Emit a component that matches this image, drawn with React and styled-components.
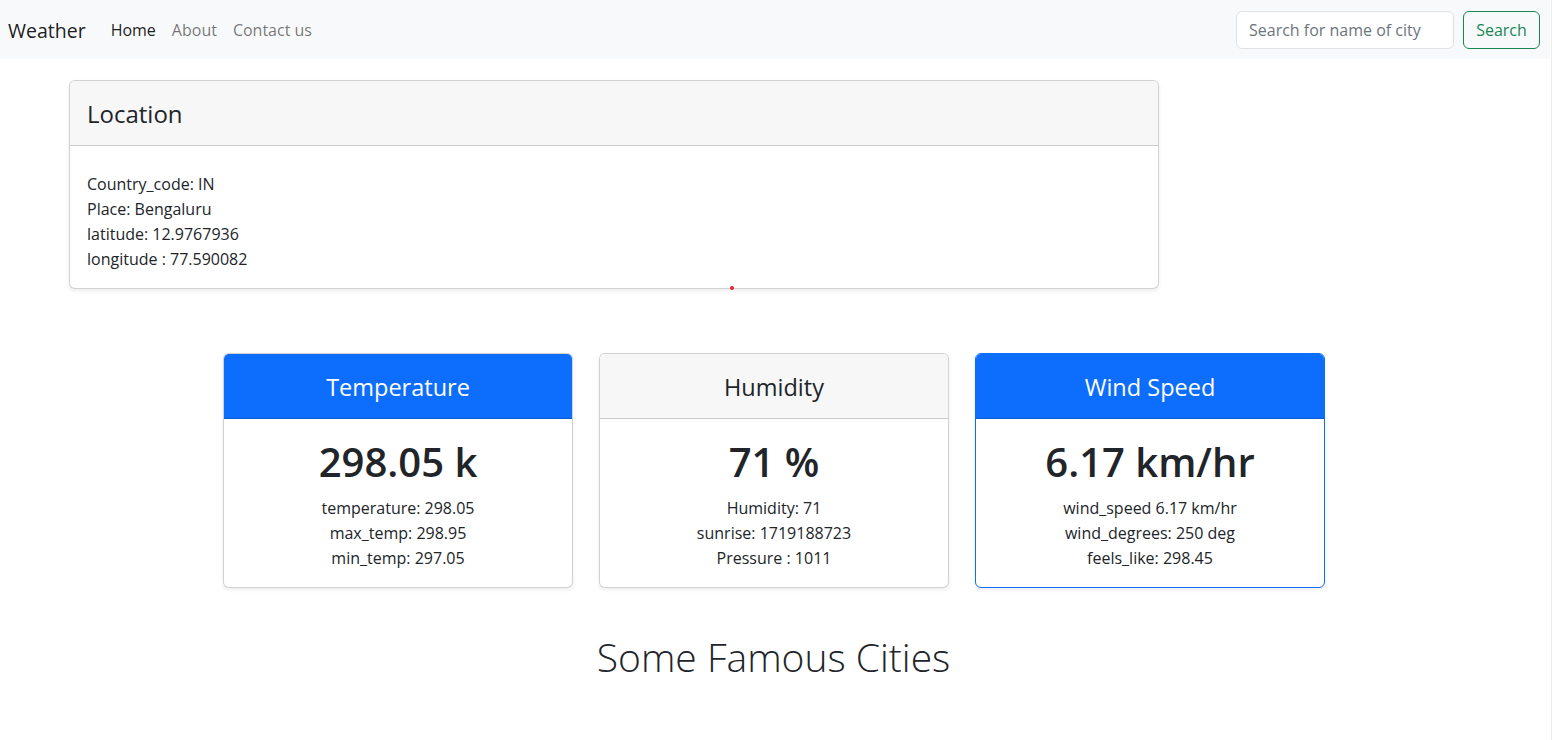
import React from 'react';
import styled, { createGlobalStyle } from 'styled-components';

const GlobalStyle = createGlobalStyle`
  html, body {
    margin: 0;
    padding: 0;
    background: #fff;
  }
  body {
    font-family: "Open Sans", "Noto Sans", sans-serif;
    font-size: 16px;
    color: #212529;
  }
  * {
    box-sizing: border-box;
  }
`;

const stats = [
  {
    title: 'Temperature',
    value: '298.05 k',
    lines: ['temperature: 298.05', 'max_temp: 298.95', 'min_temp: 297.05'],
    variant: 'blue',
  },
  {
    title: 'Humidity',
    value: '71 %',
    lines: ['Humidity: 71', 'sunrise: 1719188723', 'Pressure : 1011'],
    variant: 'plain',
  },
  {
    title: 'Wind Speed',
    value: '6.17 km/hr',
    lines: ['wind_speed 6.17 km/hr', 'wind_degrees: 250 deg', 'feels_like: 298.45'],
    variant: 'outlined',
  },
];

const App = () => {
  return (
    <Page>
      <GlobalStyle />
      <NavBar>
        <Brand>Weather</Brand>
        <NavLinks>
          <NavLink $active>Home</NavLink>
          <NavLink>About</NavLink>
          <NavLink>Contact us</NavLink>
        </NavLinks>
        <SearchForm onSubmit={(e) => e.preventDefault()}>
          <SearchInput type="search" placeholder="Search for name of city" />
          <SearchButton type="submit">Search</SearchButton>
        </SearchForm>
      </NavBar>

      <LocationCard>
        <LocationHeader>Location</LocationHeader>
        <LocationBody>
          <div>Country_code: IN</div>
          <div>Place: Bengaluru</div>
          <div>latitude: 12.9767936</div>
          <div>longitude : 77.590082</div>
        </LocationBody>
        <Dot />
      </LocationCard>

      <StatsRow>
        {stats.map((s) => (
          <StatCard key={s.title} $variant={s.variant}>
            <StatHeader $variant={s.variant}>{s.title}</StatHeader>
            <StatBody>
              <BigValue>{s.value}</BigValue>
              {s.lines.map((l) => (
                <StatLine key={l}>{l}</StatLine>
              ))}
            </StatBody>
          </StatCard>
        ))}
      </StatsRow>

      <SectionTitle>Some Famous Cities</SectionTitle>
    </Page>
  );
};

export default App;

const Page = styled.div`
  min-height: 740px;
  width: 1552px;
  border-right: 1px solid #ececec;
  overflow: hidden;
`;

const NavBar = styled.nav`
  height: 59px;
  margin-right: 1px;
  background: #f8f9fa;
  display: flex;
  align-items: center;
  padding: 1px 10px 0 8px;
`;

const Brand = styled.a`
  font-size: 19.5px;
  color: rgba(0, 0, 0, 0.9);
  margin-right: 17px;
  cursor: pointer;
`;

const NavLinks = styled.div`
  display: flex;
  flex: 1;
`;

const NavLink = styled.a`
  padding: 0 8px;
  font-size: 16px;
  color: ${(p) => (p.$active ? 'rgba(0, 0, 0, 0.9)' : 'rgba(0, 0, 0, 0.55)')};
  cursor: pointer;
`;

const SearchForm = styled.form`
  display: flex;
  gap: 9px;
`;

const SearchInput = styled.input`
  width: 218px;
  height: 38px;
  padding: 6px 12px;
  font-family: inherit;
  font-size: 16px;
  color: #212529;
  background: #fff;
  border: 1px solid #dee2e6;
  border-radius: 6px;
  outline: none;

  &::placeholder {
    color: #6c757d;
  }
`;

const SearchButton = styled.button`
  height: 38px;
  width: 77px;
  padding: 6px 0;
  font-family: inherit;
  font-size: 16px;
  color: #198754;
  background: transparent;
  border: 1px solid #198754;
  border-radius: 6px;
  cursor: pointer;
`;

const Card = styled.div`
  position: relative;
  background: #fff;
  border: 1px solid rgba(0, 0, 0, 0.175);
  border-radius: 6px;
  box-shadow: 0 2px 4px rgba(0, 0, 0, 0.075);
`;

const LocationCard = styled(Card)`
  width: 1090px;
  margin: 21px 0 0 69px;
`;

const LocationHeader = styled.h3`
  margin: 0;
  height: 65px;
  display: flex;
  align-items: center;
  padding: 0 17px 0;
  font-size: 24px;
  font-weight: 400;
  background: #f7f7f7;
  border-bottom: 1px solid rgba(0, 0, 0, 0.175);
  border-radius: 5px 5px 0 0;
`;

const LocationBody = styled.div`
  padding: 26px 17px 16px;
  line-height: 25px;
`;

const Dot = styled.span`
  position: absolute;
  left: 660px;
  bottom: -2px;
  width: 4px;
  height: 4px;
  border-radius: 50%;
  background: #e8202a;
`;

const StatsRow = styled.div`
  display: flex;
  gap: 26px;
  margin: 64px 0 0 223px;
`;

const StatCard = styled(Card)`
  width: 350px;
  text-align: center;
  border-color: ${(p) => (p.$variant === 'outlined' ? '#0d6efd' : 'rgba(0, 0, 0, 0.175)')};
`;

const StatHeader = styled.h3`
  margin: 0;
  height: 65px;
  display: flex;
  align-items: center;
  justify-content: center;
  padding-top: 2px;
  font-size: 23.5px;
  font-weight: 400;
  color: ${(p) => (p.$variant === 'plain' ? '#212529' : '#fff')};
  background: ${(p) => (p.$variant === 'plain' ? '#f7f7f7' : '#0d6efd')};
  border-bottom: 1px solid rgba(0, 0, 0, 0.175);
  border-radius: 5px 5px 0 0;
`;

const StatBody = styled.div`
  padding: 19px 16px 16px;
`;

const BigValue = styled.h1`
  margin: 0 0 10px;
  font-size: 40px;
  line-height: 48px;
  font-weight: 600;
`;

const StatLine = styled.div`
  line-height: 25px;
`;

const SectionTitle = styled.h1`
  margin: 45px 0 0;
  padding-right: 4px;
  text-align: center;
  font-size: 39px;
  line-height: 48px;
  font-weight: 300;
`;
